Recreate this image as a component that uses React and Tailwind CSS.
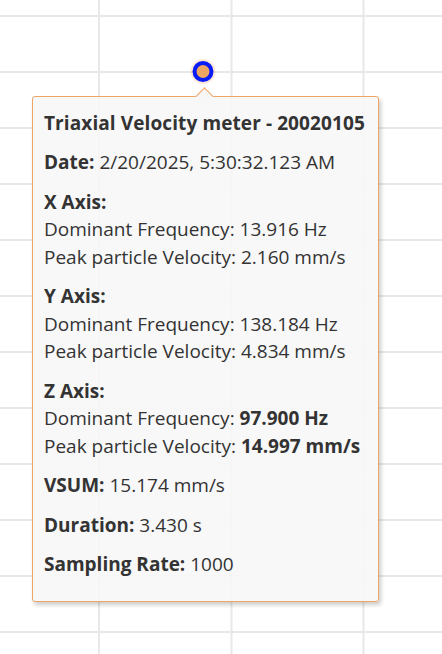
import React from 'react';

const font = { fontFamily: '"Open Sans", "Noto Sans", sans-serif' };

function ChartGrid() {
  const rows = [];
  for (let y = 16; y < 654; y += 56) rows.push(y);
  const cols = [99, 231.5, 363.5];
  return (
    <svg className="absolute inset-0" width="442" height="654" viewBox="0 0 442 654">
      {rows.map((y) => (
        <line key={'h' + y} x1="0" x2="442" y1={y} y2={y} stroke="#e8e8e8" strokeWidth="2" />
      ))}
      {cols.map((x) => (
        <line key={'v' + x} x1={x} x2={x} y1="0" y2="654" stroke="#e8e8e8" strokeWidth="2" />
      ))}
      {/* hovered point */}
      <circle cx="203" cy="71.5" r="12.5" fill="#f3a86a" fillOpacity="0.25" />
      <circle cx="203" cy="71.5" r="8.5" fill="#eea562" stroke="#0a1cf5" strokeWidth="4" />
    </svg>
  );
}

function Row({ label, children }) {
  return (
    <p className="mb-3 leading-[27.5px]">
      <b className="font-bold">{label}</b> {children}
    </p>
  );
}

export default function App() {
  return (
    <div className="relative w-[442px] h-[654px] bg-white overflow-hidden" style={font}>
      <ChartGrid />

      {/* tooltip */}
      <div className="absolute left-[32px] top-[96px] w-[347px] h-[506px] rounded-[3px] border border-[#f0a466] bg-[#f7f7f7]/90 shadow-[2px_3px_4px_rgba(0,0,0,0.2)] pl-[11px] pr-3 pt-[12.5px] text-[19px] text-[#333333] whitespace-nowrap">
        <div className="absolute left-[165px] -top-[7px] w-[13px] h-[13px] rotate-45 border-l border-t border-[#f0a466] bg-[#f7f7f7]" />
        <p className="mb-3 leading-[27.5px] font-bold tracking-[0.1px]">Triaxial Velocity meter - 20020105</p>
        <Row label="Date:">2/20/2025, 5:30:32.123 AM</Row>
        <div className="mb-3 leading-[27.5px]">
          <div className="font-bold">X Axis:</div>
          <div>Dominant Frequency: 13.916 Hz</div>
          <div>Peak particle Velocity: 2.160 mm/s</div>
        </div>
        <div className="mb-3 leading-[27.5px]">
          <div className="font-bold">Y Axis:</div>
          <div>Dominant Frequency: 138.184 Hz</div>
          <div>Peak particle Velocity: 4.834 mm/s</div>
        </div>
        <div className="mb-3 leading-[27.5px]">
          <div className="font-bold">Z Axis:</div>
          <div>Dominant Frequency: <b className="font-bold">97.900 Hz</b></div>
          <div>Peak particle Velocity: <b className="font-bold">14.997 mm/s</b></div>
        </div>
        <Row label="VSUM:">15.174 mm/s</Row>
        <Row label="Duration:">3.430 s</Row>
        <Row label="Sampling Rate:">1000</Row>
      </div>
    </div>
  );
}
